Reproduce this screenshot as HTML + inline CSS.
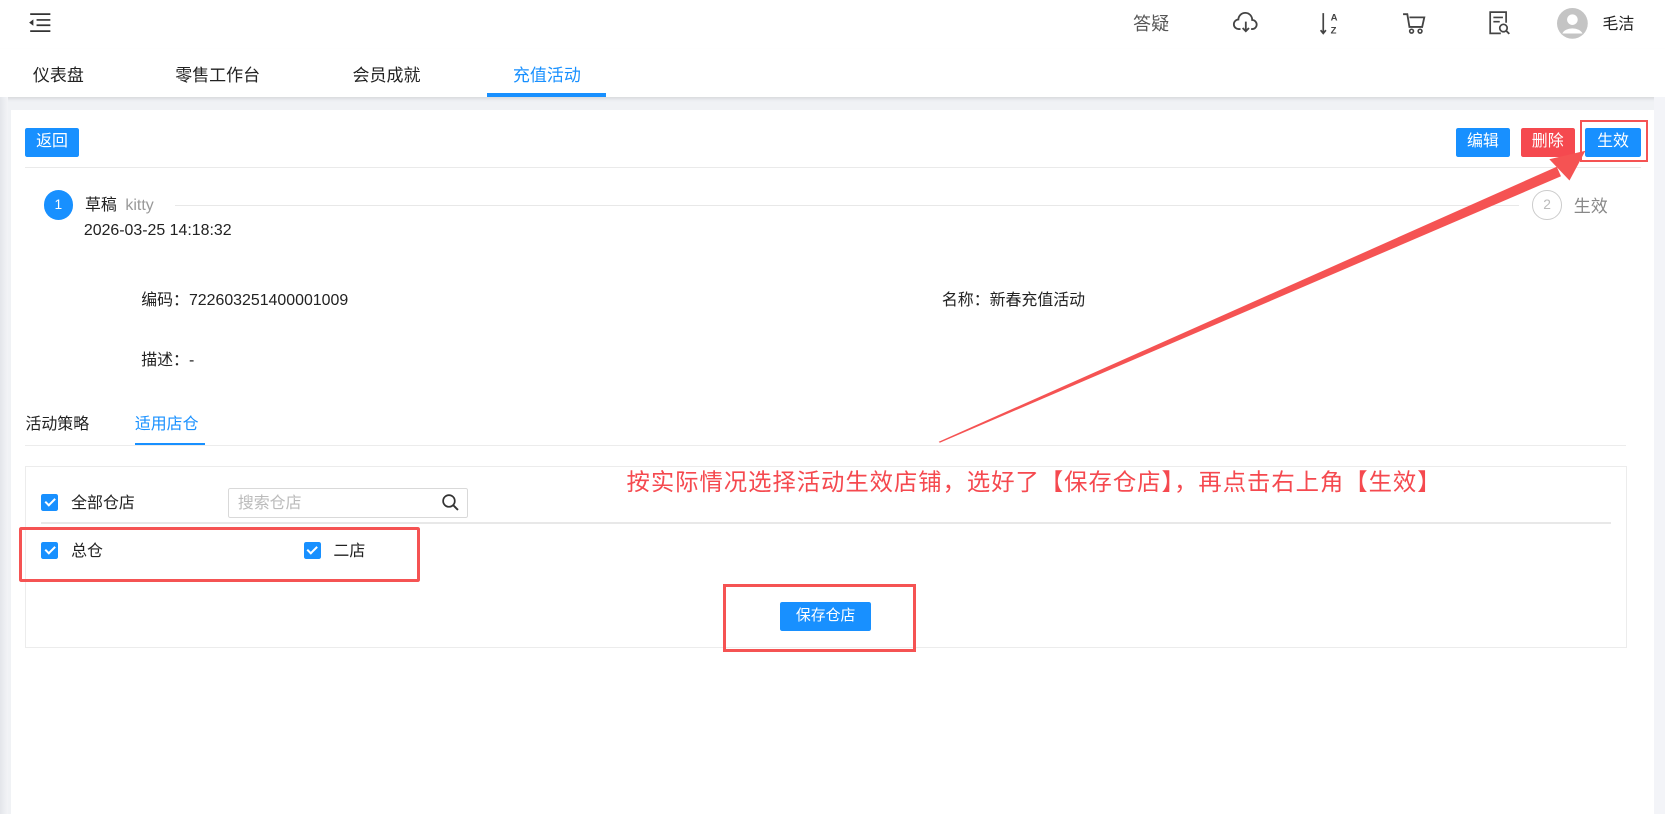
<!DOCTYPE html>
<html><head><meta charset="utf-8">
<style>
html,body{margin:0;padding:0;overflow:hidden;}
body{width:1665px;height:814px;background:#f0f2f5;}
#r{zoom:1.0619;width:1568px;height:767px;position:relative;background:#f0f2f5;font-family:"Liberation Sans","Noto Sans CJK SC",sans-serif;color:#333;overflow:hidden;}
.a{position:absolute;white-space:nowrap;}
.btn{position:absolute;height:27px;line-height:27px;color:#fff;font-size:15px;text-align:center;border-radius:2px;background:#1890ff;}
.cb{position:absolute;width:16px;height:16px;background:#1890ff;border-radius:2px;}
.cb:after{content:"";position:absolute;left:5px;top:2px;width:4px;height:8px;border:solid #fff;border-width:0 2px 2px 0;transform:rotate(45deg);}
.t15{font-size:15px;color:#222;}
</style></head><body><div id="r">
<div class="a" style="left:0;top:0;width:1568px;height:46px;background:#fff;box-shadow:0 1px 3px rgba(0,0,0,.08);"></div>
<svg class="a" style="left:25px;top:11px" width="24" height="20" viewBox="0 0 24 20"><path d="M3 2h19M9 7.5h13M9 12.5h13M3 18h19" stroke="#333" stroke-width="1.6" fill="none"/><path d="M2 10l4-3v6z" fill="#333"/></svg>
<div class="a" style="left:1067px;top:9px;font-size:17px;color:#555;">答疑</div>
<svg class="a" style="left:1160px;top:10px" width="26" height="24" viewBox="0 0 26 24"><path d="M8 17H6.5a4.5 4.5 0 0 1-.5-9 6.5 6.5 0 0 1 13 0.5 4 4 0 0 1 0 8.5H18" stroke="#444" stroke-width="1.7" fill="none"/><path d="M13 10v9M10 16l3 3 3-3" stroke="#444" stroke-width="1.7" fill="none"/></svg>
<svg class="a" style="left:1242px;top:9px" width="22" height="26" viewBox="0 0 22 26"><path d="M4 3v19M1.5 19l2.5 3 2.5-3" stroke="#444" stroke-width="1.6" fill="none"/><text x="11" y="10" font-size="9" font-weight="bold" fill="#444" font-family="Liberation Sans">A</text><text x="11" y="22" font-size="9" font-weight="bold" fill="#444" font-family="Liberation Sans">Z</text></svg>
<svg class="a" style="left:1320px;top:10px" width="24" height="24" viewBox="0 0 24 24"><path d="M1 3h4l2 12h12l2-9H7" stroke="#444" stroke-width="1.7" fill="none"/><circle cx="9" cy="19" r="1.8" fill="none" stroke="#444" stroke-width="1.5"/><circle cx="17" cy="19" r="1.8" fill="none" stroke="#444" stroke-width="1.5"/></svg>
<svg class="a" style="left:1400px;top:9px" width="24" height="26" viewBox="0 0 24 26"><path d="M13 22H3V2h15v10" stroke="#444" stroke-width="1.6" fill="none"/><path d="M6 7h9M6 11h6" stroke="#444" stroke-width="1.5"/><circle cx="15.5" cy="17" r="3.5" stroke="#444" stroke-width="1.6" fill="none"/><path d="M18 19.5l3 3" stroke="#444" stroke-width="1.7"/></svg>
<svg class="a" style="left:1466px;top:8px" width="29" height="29" viewBox="0 0 29 29"><circle cx="14.5" cy="14.5" r="14.5" fill="#c4c4c4"/><circle cx="14.5" cy="11" r="5" fill="#fff"/><path d="M5 24a10 7 0 0 1 19 0z" fill="#fff"/></svg>
<div class="a" style="left:1509px;top:10px;font-size:15px;color:#222;">毛洁</div>
<div class="a" style="left:0;top:46px;width:1568px;height:45px;background:#fff;box-shadow:0 2px 3px rgba(0,0,0,.1);"></div>
<div class="a" style="left:31px;top:57px;font-size:16px;color:#222;">仪表盘</div>
<div class="a" style="left:165px;top:57px;font-size:16px;color:#222;">零售工作台</div>
<div class="a" style="left:332px;top:57px;font-size:16px;color:#222;">会员成就</div>
<div class="a" style="left:483px;top:57px;font-size:16px;color:#1890ff;">充值活动</div>
<div class="a" style="left:459px;top:88px;width:112px;height:3px;background:#1890ff;"></div>
<div class="a" style="left:0;top:91px;width:8px;height:680px;background:linear-gradient(90deg,#e3e5ea,#f3f4f7);"></div>
<div class="a" style="left:10px;top:104px;width:1548px;height:670px;background:#fff;"></div>
<div class="btn" style="left:24px;top:121px;width:50px;">返回</div>
<div class="btn" style="left:1371px;top:121px;width:51px;">编辑</div>
<div class="btn" style="left:1432px;top:121px;width:51px;background:#f5494f;">删除</div>
<div class="btn" style="left:1493px;top:121px;width:52px;">生效</div>
<div class="a" style="left:1488px;top:113px;width:60px;height:36px;border:2px solid #f55353;"></div>
<div class="a" style="left:24px;top:157px;width:1521px;height:1px;background:#eaeaea;"></div>
<div class="a" style="left:41px;top:179px;width:28px;height:28px;border-radius:50%;background:#1890ff;color:#fff;font-size:13px;line-height:28px;text-align:center;">1</div>
<div class="a t15" style="left:80px;top:181px;">草稿 <span style="color:#999;margin-left:4px;">kitty</span></div>
<div class="a" style="left:165px;top:193px;width:1265px;height:1px;background:#e8e8e8;"></div>
<div class="a" style="left:1443px;top:179px;width:26px;height:26px;border-radius:50%;border:1px solid #ccc;color:#bbb;font-size:13px;line-height:26px;text-align:center;">2</div>
<div class="a" style="left:1482px;top:181px;font-size:16px;color:#888;">生效</div>
<div class="a t15" style="left:79px;top:209px;">2026-03-25 14:18:32</div>
<div class="a t15" style="left:133px;top:270px;">编码：722603251400001009</div>
<div class="a t15" style="left:887px;top:270px;">名称：新春充值活动</div>
<div class="a t15" style="left:133px;top:327px;">描述：-</div>
<div class="a t15" style="left:24px;top:387px;">活动策略</div>
<div class="a" style="left:127px;top:387px;font-size:15px;color:#1890ff;">适用店仓</div>
<div class="a" style="left:24px;top:419px;width:1507px;height:1px;background:#ececec;"></div>
<div class="a" style="left:127px;top:417px;width:66px;height:2px;background:#1890ff;"></div>
<div class="a" style="left:24px;top:439px;width:1506px;height:169px;border:1px solid #ececec;"></div>
<div class="cb" style="left:39px;top:465px;"></div>
<div class="a t15" style="left:67px;top:461px;">全部仓店</div>
<div class="a" style="left:215px;top:460px;width:224px;height:26px;border:1px solid #d9d9d9;border-radius:2px;"></div>
<div class="a" style="left:224px;top:461px;font-size:15px;color:#bbb;">搜索仓店</div>
<svg class="a" style="left:415px;top:464px" width="18" height="18" viewBox="0 0 18 18"><circle cx="7.5" cy="7.5" r="5.5" stroke="#333" stroke-width="1.6" fill="none"/><path d="M11.5 11.5l4.5 4.5" stroke="#333" stroke-width="1.8"/></svg>
<div class="a" style="left:39px;top:492px;width:1478px;height:1px;background:#e8e8e8;"></div>
<div class="cb" style="left:39px;top:510px;"></div>
<div class="a t15" style="left:67px;top:507px;">总仓</div>
<div class="cb" style="left:286px;top:510px;"></div>
<div class="a t15" style="left:314px;top:507px;">二店</div>
<div class="a" style="left:18px;top:496px;width:372px;height:46px;border:3px solid #f55353;border-radius:2px;"></div>
<div class="btn" style="left:735px;top:567px;width:85px;font-size:14px;">保存仓店</div>
<div class="a" style="left:681px;top:550px;width:176px;height:58px;border:3px solid #f55353;"></div>
<div class="a" style="left:590px;top:436px;font-size:22px;letter-spacing:0.9px;color:#f5494f;">按实际情况选择活动生效店铺，选好了【保存仓店】，再点击右上角【生效】</div>
<svg class="a" style="left:0;top:0" width="1568" height="767"><polygon points="884,416 1466,157 1470,166 885,417" fill="#f55353"/><polygon points="1493,142 1459,150 1478,170" fill="#f55353"/></svg>
<div class="a" style="left:1558px;top:91px;width:10px;height:680px;background:#f3f4f8;"></div>
</div></body></html>
